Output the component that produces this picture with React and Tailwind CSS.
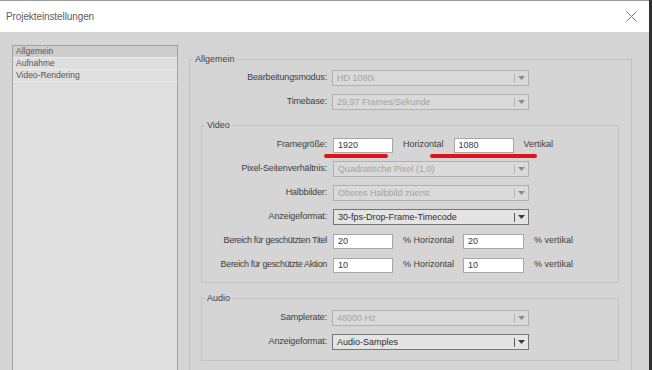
import React from "react";

function Arrow({ dark }) {
  return (
    <svg width="7" height="4" viewBox="0 0 7 4">
      <path d="M0 0 L7 0 L3.5 4 Z" fill={dark ? "#3a3a3a" : "#8a8a8a"} />
    </svg>
  );
}

function Select({ value, enabled, w = "w-[197px]" }) {
  return (
    <div
      className={`flex h-[16px] ${w} items-center border ${
        enabled ? "border-[#767676] bg-[#e4e4e4] text-[#2e2e2e]" : "border-[#b0b0b0] bg-[#dadada] text-[#a3a3a3]"
      }`}
    >
      <span className="flex-1 truncate pl-[4px] leading-[14px]">{value}</span>
      <span className={`h-[9px] w-px ${enabled ? "bg-[#5a5a5a]" : "bg-[#b4b4b4]"}`} />
      <span className="flex w-[13px] justify-center">
        <Arrow dark={enabled} />
      </span>
    </div>
  );
}

function Input({ value, w = "w-[60px]" }) {
  return (
    <div className={`flex h-[15px] ${w} items-center border border-[#a8a8a8] bg-white pl-[4px] text-[#3a3a3a] leading-[13px]`}>
      {value}
    </div>
  );
}

function Row({ label, labelW, gap, tight, children }) {
  return (
    <div className="flex h-[24px] items-center">
      <div
        className={`${labelW} flex shrink-0 justify-end whitespace-nowrap text-[#3e3e3e] ${
          tight ? "tracking-[-0.35px]" : "tracking-[-0.15px]"
        }`}
      >
        {label}
      </div>
      <div className={`${gap} flex items-center`}>{children}</div>
    </div>
  );
}

function Group({ title, className = "", children }) {
  return (
    <fieldset className={`border border-[#c3c3c3] ${className}`}>
      <legend className="ml-[3px] px-[2px] leading-[12px] text-[#444]">{title}</legend>
      {children}
    </fieldset>
  );
}

export default function App() {
  return (
    <div className="relative flex h-[370px] w-[652px] overflow-hidden bg-[#d5d5d5] font-['Liberation_Sans',Arial,sans-serif] text-[9px]">
      <div className="flex min-w-0 flex-1 flex-col">
        <div className="flex h-[32px] shrink-0 items-center justify-between border-t border-[#9a9a9a] bg-white pl-[6px] pr-[12px]">
          <span className="text-[10px] tracking-[-0.1px] text-[#5e5e5e]">Projekteinstellungen</span>
          <svg width="11" height="11" viewBox="0 0 11 11">
            <path d="M0.5 0.5 L10.5 10.5 M10.5 0.5 L0.5 10.5" stroke="#7a7a7a" strokeWidth="1" />
          </svg>
        </div>
        <div className="flex flex-1 items-start pl-[12px] pt-[13px]">
          <div className="h-[400px] w-[166px] shrink-0 border border-[#a2a2a2] bg-[#dfdfdf] text-[8.5px] text-[#555]">
            <div className="h-[12px] border-b border-[#ececec] bg-[#cdcdcd] pl-[3px] leading-[11px]">Allgemein</div>
            <div className="h-[12px] border-b border-[#ececec] pl-[3px] leading-[11px]">Aufnahme</div>
            <div className="h-[12px] border-b border-[#ececec] pl-[3px] leading-[11px]">Video-Rendering</div>
          </div>
          <Group title="Allgemein" className="ml-[11px] mt-[8px] h-[400px] w-[443px] shrink-0">
            <div className="pl-[11px] pr-[12px] pt-[1px]">
              <Row label="Bearbeitungsmodus:" labelW="w-[126px]" gap="ml-[5px]">
                <Select value="HD 1080i" />
              </Row>
              <Row label="Timebase:" labelW="w-[126px]" gap="ml-[5px]">
                <Select value="29,97 Frames/Sekunde" />
              </Row>
              <Group title="Video" className="mt-[5px]">
                <div className="pb-[5px] pl-[14px] pt-[2px]">
                  <Row label="Framegröße:" labelW="w-[111px]" gap="ml-[6px]">
                    <Input value="1920" />
                    <span className="ml-[10px] text-[#3e3e3e]">Horizontal</span>
                    <span className="ml-[10px]">
                      <Input value="1080" />
                    </span>
                    <span className="ml-[10px] text-[#3e3e3e]">Vertikal</span>
                  </Row>
                  <Row label="Pixel-Seitenverhältnis:" labelW="w-[111px]" gap="ml-[6px]">
                    <Select value="Quadratische Pixel (1,0)" w="w-[196px]" />
                  </Row>
                  <Row label="Halbbilder:" labelW="w-[111px]" gap="ml-[6px]">
                    <Select value="Oberes Halbbild zuerst" w="w-[196px]" />
                  </Row>
                  <Row label="Anzeigeformat:" labelW="w-[111px]" gap="ml-[6px]">
                    <Select value="30-fps-Drop-Frame-Timecode" enabled w="w-[196px]" />
                  </Row>
                  <Row label="Bereich für geschützten Titel" labelW="w-[111px]" gap="ml-[6px]" tight>
                    <Input value="20" />
                    <span className="ml-[10px] text-[#3e3e3e]">% Horizontal</span>
                    <span className="ml-[9px]">
                      <Input value="20" w="w-[61px]" />
                    </span>
                    <span className="ml-[10px] text-[#3e3e3e]">% vertikal</span>
                  </Row>
                  <Row label="Bereich für geschützte Aktion" labelW="w-[111px]" gap="ml-[6px]" tight>
                    <Input value="10" />
                    <span className="ml-[10px] text-[#3e3e3e]">% Horizontal</span>
                    <span className="ml-[9px]">
                      <Input value="10" w="w-[61px]" />
                    </span>
                    <span className="ml-[10px] text-[#3e3e3e]">% vertikal</span>
                  </Row>
                </div>
              </Group>
              <Group title="Audio" className="mt-[9px]">
                <div className="pb-[6px] pl-[14px] pt-[2px]">
                  <Row label="Samplerate:" labelW="w-[111px]" gap="ml-[5px]">
                    <Select value="48000 Hz" />
                  </Row>
                  <Row label="Anzeigeformat:" labelW="w-[111px]" gap="ml-[5px]">
                    <Select value="Audio-Samples" enabled />
                  </Row>
                </div>
              </Group>
            </div>
          </Group>
        </div>
      </div>
      <div className="w-[3px] shrink-0 bg-[#2f2f2f]" />
      <div className="absolute left-[324px] top-[154px] h-[4px] w-[64px] rounded-full bg-[#dc1419]" />
      <div className="absolute left-[430px] top-[154px] h-[4px] w-[107px] rounded-full bg-[#dc1419]" />
    </div>
  );
}
